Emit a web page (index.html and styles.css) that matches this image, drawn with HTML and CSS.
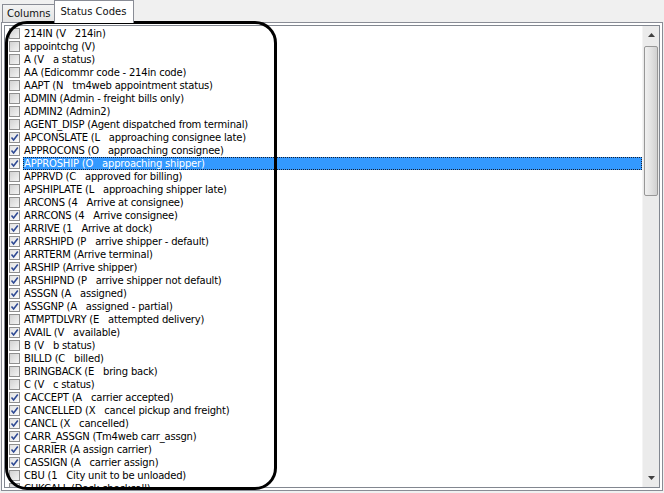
FILE: index.html
```html
<!DOCTYPE html>
<html>
<head>
<meta charset="utf-8">
<link rel="stylesheet" href="styles.css">
</head>
<body>
<div class="frame">
  <div class="tabs">
    <div class="tab">Columns</div>
    <div class="tab active">Status Codes</div>
  </div>
  <div class="panel">
    <div class="listbox">
      <div class="list">
        <div class="row"><span class="cb"></span><span class="label">214IN (V   214in)</span></div>
        <div class="row"><span class="cb"></span><span class="label">appointchg (V)</span></div>
        <div class="row"><span class="cb"></span><span class="label">A (V   a status)</span></div>
        <div class="row"><span class="cb"></span><span class="label">AA (Edicommr code - 214in code)</span></div>
        <div class="row"><span class="cb"></span><span class="label">AAPT (N   tm4web appointment status)</span></div>
        <div class="row"><span class="cb"></span><span class="label">ADMIN (Admin - freight bills only)</span></div>
        <div class="row"><span class="cb"></span><span class="label">ADMIN2 (Admin2)</span></div>
        <div class="row"><span class="cb"></span><span class="label">AGENT_DISP (Agent dispatched from terminal)</span></div>
        <div class="row"><span class="cb on"><svg viewBox="0 0 9 9"><path d="M1.5 4.5 L3.6 7 L7.8 1.5"/></svg></span><span class="label">APCONSLATE (L   approaching consignee late)</span></div>
        <div class="row"><span class="cb on"><svg viewBox="0 0 9 9"><path d="M1.5 4.5 L3.6 7 L7.8 1.5"/></svg></span><span class="label">APPROCONS (O   approaching consignee)</span></div>
        <div class="row sel"><span class="cb on"><svg viewBox="0 0 9 9"><path d="M1.5 4.5 L3.6 7 L7.8 1.5"/></svg></span><span class="label">APPROSHIP (O   approaching shipper)</span></div>
        <div class="row"><span class="cb"></span><span class="label">APPRVD (C   approved for billing)</span></div>
        <div class="row"><span class="cb"></span><span class="label">APSHIPLATE (L   approaching shipper late)</span></div>
        <div class="row"><span class="cb"></span><span class="label">ARCONS (4   Arrive at consignee)</span></div>
        <div class="row"><span class="cb on"><svg viewBox="0 0 9 9"><path d="M1.5 4.5 L3.6 7 L7.8 1.5"/></svg></span><span class="label">ARRCONS (4   Arrive consignee)</span></div>
        <div class="row"><span class="cb on"><svg viewBox="0 0 9 9"><path d="M1.5 4.5 L3.6 7 L7.8 1.5"/></svg></span><span class="label">ARRIVE (1   Arrive at dock)</span></div>
        <div class="row"><span class="cb on"><svg viewBox="0 0 9 9"><path d="M1.5 4.5 L3.6 7 L7.8 1.5"/></svg></span><span class="label">ARRSHIPD (P   arrive shipper - default)</span></div>
        <div class="row"><span class="cb on"><svg viewBox="0 0 9 9"><path d="M1.5 4.5 L3.6 7 L7.8 1.5"/></svg></span><span class="label">ARRTERM (Arrive terminal)</span></div>
        <div class="row"><span class="cb on"><svg viewBox="0 0 9 9"><path d="M1.5 4.5 L3.6 7 L7.8 1.5"/></svg></span><span class="label">ARSHIP (Arrive shipper)</span></div>
        <div class="row"><span class="cb on"><svg viewBox="0 0 9 9"><path d="M1.5 4.5 L3.6 7 L7.8 1.5"/></svg></span><span class="label">ARSHIPND (P   arrive shipper not default)</span></div>
        <div class="row"><span class="cb on"><svg viewBox="0 0 9 9"><path d="M1.5 4.5 L3.6 7 L7.8 1.5"/></svg></span><span class="label">ASSGN (A   assigned)</span></div>
        <div class="row"><span class="cb on"><svg viewBox="0 0 9 9"><path d="M1.5 4.5 L3.6 7 L7.8 1.5"/></svg></span><span class="label">ASSGNP (A   assigned - partial)</span></div>
        <div class="row"><span class="cb"></span><span class="label">ATMPTDLVRY (E   attempted delivery)</span></div>
        <div class="row"><span class="cb on"><svg viewBox="0 0 9 9"><path d="M1.5 4.5 L3.6 7 L7.8 1.5"/></svg></span><span class="label">AVAIL (V   available)</span></div>
        <div class="row"><span class="cb"></span><span class="label">B (V   b status)</span></div>
        <div class="row"><span class="cb"></span><span class="label">BILLD (C   billed)</span></div>
        <div class="row"><span class="cb"></span><span class="label">BRINGBACK (E   bring back)</span></div>
        <div class="row"><span class="cb"></span><span class="label">C (V   c status)</span></div>
        <div class="row"><span class="cb on"><svg viewBox="0 0 9 9"><path d="M1.5 4.5 L3.6 7 L7.8 1.5"/></svg></span><span class="label">CACCEPT (A   carrier accepted)</span></div>
        <div class="row"><span class="cb on"><svg viewBox="0 0 9 9"><path d="M1.5 4.5 L3.6 7 L7.8 1.5"/></svg></span><span class="label">CANCELLED (X   cancel pickup and freight)</span></div>
        <div class="row"><span class="cb on"><svg viewBox="0 0 9 9"><path d="M1.5 4.5 L3.6 7 L7.8 1.5"/></svg></span><span class="label">CANCL (X   cancelled)</span></div>
        <div class="row"><span class="cb on"><svg viewBox="0 0 9 9"><path d="M1.5 4.5 L3.6 7 L7.8 1.5"/></svg></span><span class="label">CARR_ASSGN (Tm4web carr_assgn)</span></div>
        <div class="row"><span class="cb on"><svg viewBox="0 0 9 9"><path d="M1.5 4.5 L3.6 7 L7.8 1.5"/></svg></span><span class="label">CARRIER (A assign carrier)</span></div>
        <div class="row"><span class="cb on"><svg viewBox="0 0 9 9"><path d="M1.5 4.5 L3.6 7 L7.8 1.5"/></svg></span><span class="label">CASSIGN (A   carrier assign)</span></div>
        <div class="row"><span class="cb"></span><span class="label">CBU (1   City unit to be unloaded)</span></div>
        <div class="row"><span class="cb"></span><span class="label">CHKCALL (Dock checkcall)</span></div>
      </div>
      <div class="scrollbar">
        <div class="arrow up"><svg viewBox="0 0 7 4"><path d="M3.5 0 L7 4 L0 4 Z"/></svg></div>
        <div class="track"><div class="thumb"></div></div>
        <div class="arrow down"><svg viewBox="0 0 7 4"><path d="M0 0 L7 0 L3.5 4 Z"/></svg></div>
      </div>
    </div>
  </div>
  <div class="callout"></div>
</div>
</body>
</html>
```
FILE: styles.css
```css
* { box-sizing: border-box; }
html, body {
  margin: 0;
  padding: 0;
  background: #f0f0f0;
}
body {
  font-family: "DejaVu Sans", "Liberation Sans", sans-serif;
  font-size: 10px;
  color: #000;
}
.frame {
  position: relative;
  width: 664px;
  height: 493px;
  overflow: hidden;
}
.tabs {
  display: flex;
  align-items: flex-end;
  height: 22px;
  padding-left: 2px;
}
.tab {
  height: 18px;
  padding: 2px 3px 0 4px;
  border: 1px solid #898c95;
  border-bottom: none;
  background: linear-gradient(#f3f3f3, #e3e3e3);
  line-height: 13px;
  color: #111;
}
.tab.active {
  height: 23px;
  padding: 4px 7px 0 6px;
  background: #fff;
  margin-bottom: -1px;
  margin-left: -1px;
  position: relative;
  z-index: 1;
}
.panel {
  margin: 0 1px 0 1px;
  height: 469px;
  border: 1px solid #898c95;
  background: #fff;
  padding: 2px;
}
.listbox {
  display: flex;
  height: 463px;
  border: 1px solid #828790;
  background: #fff;
}
.list {
  flex: 1;
  overflow: hidden;
  padding-top: 1px;
}
.row {
  display: flex;
  align-items: center;
  height: 13px;
  padding-left: 4px;
  white-space: pre;
  letter-spacing: -0.2px;
}
.cb {
  flex: none;
  width: 11px;
  height: 11px;
  border: 1px solid #8f8f8f;
  background: linear-gradient(135deg, #d2d2d2, #f4f4f4);
  margin-right: 3px;
  display: flex;
}
.cb.on {
  background: linear-gradient(135deg, #e2e2e2, #fbfbfb);
}
.cb svg {
  width: 9px;
  height: 9px;
  fill: none;
  stroke: #2f4a94;
  stroke-width: 1.6;
}
.label {
  flex: 1;
  height: 13px;
  line-height: 13px;
  padding-left: 1px;
}
.row.sel .label {
  background: #3399ff;
  color: #fff;
  outline: 1px dotted #1a2030;
  outline-offset: -1px;
}
.scrollbar {
  flex: none;
  width: 17px;
  display: flex;
  flex-direction: column;
  background: #ebebeb;
  border-left: 1px solid #f4f4f4;
}
.arrow {
  height: 18px;
  display: flex;
  align-items: center;
  justify-content: center;
}
.arrow svg {
  width: 7px;
  height: 4px;
  fill: #404040;
}
.track {
  flex: 1;
  padding: 2px 1px 0 1px;
}
.thumb {
  height: 150px;
  border: 1px solid #979797;
  border-radius: 2px;
  background: linear-gradient(90deg, #f0f0f0, #e2e2e2 50%, #d0d0d0);
}
.callout {
  position: absolute;
  left: 5px;
  top: 21px;
  width: 272px;
  height: 469px;
  border: 3px solid #000;
  border-radius: 22px;
  pointer-events: none;
}
```
